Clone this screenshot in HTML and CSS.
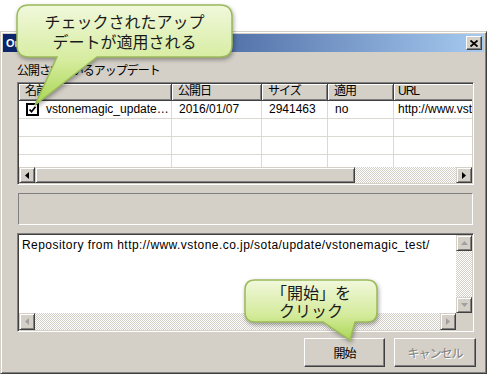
FILE: index.html
```html
<!DOCTYPE html>
<html lang="ja">
<head>
    <meta charset="UTF-8">
    <meta name="viewport" content="width=device-width, initial-scale=1.0">
    <title>Online Update</title>
    <link rel="stylesheet" href="styles.css">
</head>
<body>
    <div class="dialog">
        <div class="titlebar">
            <span class="title">Online Update</span>
            <span class="close-btn">
                <svg width="8" height="7" viewBox="0 0 8 7"><path d="M0.5 0.5L7.5 6.5M7.5 0.5L0.5 6.5" stroke="#000" stroke-width="1.8"/></svg>
            </span>
        </div>

        <div class="content">
            <div class="group-label jp">公開されているアップデート</div>

            <div class="listview">
                <div class="lv-header jp">
                    <div class="cell c-name">名前</div>
                    <div class="cell c-date">公開日</div>
                    <div class="cell c-size">サイズ</div>
                    <div class="cell c-apply">適用</div>
                    <div class="cell c-url">URL</div>
                </div>
                <div class="lv-body">
                    <div class="lv-row">
                        <div class="cell c-name">
                            <svg class="check" width="13" height="13" viewBox="0 0 13 13"><rect x="1" y="1" width="11" height="11" fill="#fff" stroke="#000" stroke-width="2"/><path d="M3.5 6.5l2 2.2 4-5" fill="none" stroke="#000" stroke-width="1.8"/></svg>
                            <span>vstonemagic_update…</span>
                        </div>
                        <div class="cell c-date">2016/01/07</div>
                        <div class="cell c-size">2941463</div>
                        <div class="cell c-apply">no</div>
                        <div class="cell c-url">http://www.vstone.co.jp/</div>
                    </div>
                    <div class="lv-row">
                        <div class="cell c-name"></div><div class="cell c-date"></div><div class="cell c-size"></div><div class="cell c-apply"></div><div class="cell c-url"></div>
                    </div>
                    <div class="lv-row">
                        <div class="cell c-name"></div><div class="cell c-date"></div><div class="cell c-size"></div><div class="cell c-apply"></div><div class="cell c-url"></div>
                    </div>
                    <div class="lv-row">
                        <div class="cell c-name"></div><div class="cell c-date"></div><div class="cell c-size"></div><div class="cell c-apply"></div><div class="cell c-url"></div>
                    </div>
                </div>
                <div class="hscroll">
                    <span class="sb-btn"><svg width="4" height="7" viewBox="0 0 4 7"><path d="M4 0v7L0 3.5z"/></svg></span>
                    <span class="sb-thumb"></span>
                    <span class="sb-track"></span>
                    <span class="sb-btn"><svg width="4" height="7" viewBox="0 0 4 7"><path d="M0 0v7l4-3.5z"/></svg></span>
                </div>
            </div>

            <div class="status-panel"></div>

            <div class="log-box">
                <div class="log-main">
                    <div class="log-text">Repository from http://www.vstone.co.jp/sota/update/vstonemagic_test/</div>
                    <div class="vscroll">
                        <span class="sb-btn dim"><svg width="7" height="4" viewBox="0 0 7 4"><path d="M0 4h7L3.5 0z"/></svg></span>
                        <span class="sb-track"></span>
                        <span class="sb-btn dim"><svg width="7" height="4" viewBox="0 0 7 4"><path d="M0 0h7L3.5 4z"/></svg></span>
                    </div>
                </div>
                <div class="log-bottom">
                    <span class="sb-btn dim"><svg width="4" height="7" viewBox="0 0 4 7"><path d="M4 0v7L0 3.5z"/></svg></span>
                    <span class="sb-track"></span>
                    <span class="sb-btn dim"><svg width="4" height="7" viewBox="0 0 4 7"><path d="M0 0v7l4-3.5z"/></svg></span>
                    <span class="corner"></span>
                </div>
            </div>

            <div class="buttons jp">
                <button class="btn btn-default">開始</button>
                <button class="btn" disabled>キャンセル</button>
            </div>
        </div>
    </div>

    <div class="callout callout-check">
        <svg class="bubble" width="235" height="112" viewBox="0 0 235 112">
            <defs>
                <linearGradient id="g1" x1="0" y1="0" x2="0" y2="1">
                    <stop offset="0" stop-color="#f1f8dc"/>
                    <stop offset="0.55" stop-color="#d6ec9f"/>
                    <stop offset="1" stop-color="#a9d653"/>
                </linearGradient>
            </defs>
            <path d="M19 5H210Q222 5 222 17V45Q222 57 210 57H87L25 105L47 57H19Q7 57 7 45V17Q7 5 19 5Z" fill="url(#g1)" stroke="#9bbb59" stroke-width="1.5"/>
        </svg>
        <div class="callout-text">チェックされたアップ<br>デートが適用される</div>
    </div>

    <div class="callout callout-start">
        <svg class="bubble" width="145" height="70" viewBox="0 0 145 70">
            <defs>
                <linearGradient id="g2" x1="0" y1="0" x2="0" y2="1">
                    <stop offset="0" stop-color="#f1f8dc"/>
                    <stop offset="0.6" stop-color="#d3ea99"/>
                    <stop offset="1" stop-color="#a9d653"/>
                </linearGradient>
            </defs>
            <path d="M15 5H127Q137 5 137 15V37Q137 47 127 47H115L110 65L83 47H15Q5 47 5 37V15Q5 5 15 5Z" fill="url(#g2)" stroke="#9bbb59" stroke-width="1.5"/>
        </svg>
        <div class="callout-text">「開始」を<br>クリック</div>
    </div>
</body>
</html>
```

FILE: styles.css
```css
body {
    margin: 0;
    width: 490px;
    height: 375px;
    position: relative;
    overflow: hidden;
    background: #ffffff;
    font-family: "Liberation Sans", "Noto Sans CJK JP", sans-serif;
    font-size: 12px;
    color: #000;
}
.jp {
    letter-spacing: -1px;
}
.dialog {
    box-sizing: border-box;
    margin-top: 31px;
    width: 487px;
    height: 343px;
    padding: 2px;
    background: #d4d0c8;
    border: 1px solid;
    border-color: #d4d0c8 #404040 #404040 #d4d0c8;
    box-shadow: inset 1px 1px #fff, inset -1px -1px #808080;
}
.titlebar {
    height: 18px;
    display: flex;
    align-items: center;
    justify-content: space-between;
    padding: 0 2px 0 3px;
    background: linear-gradient(to right, #0a246a, #a6caf0);
}
.title {
    color: #fff;
    font-weight: bold;
    font-size: 11px;
}
.close-btn {
    box-sizing: border-box;
    width: 16px;
    height: 14px;
    display: flex;
    align-items: center;
    justify-content: center;
    background: #d4d0c8;
    border: 1px solid;
    border-color: #fff #404040 #404040 #fff;
    box-shadow: inset -1px -1px #808080;
}
.content {
    padding: 12px 10px 0 14px;
}
.group-label {
    height: 14px;
    line-height: 14px;
    margin-bottom: 4px;
}

/* list view */
.listview {
    box-sizing: border-box;
    height: 103px;
    border: 1px solid;
    border-color: #808080 #fff #fff #808080;
    box-shadow: inset 1px 1px #404040, inset -1px -1px #d4d0c8;
    padding: 1px;
    display: flex;
    flex-direction: column;
}
.lv-header {
    display: flex;
    height: 17px;
    overflow: hidden;
    flex: none;
}
.lv-header .cell {
    box-sizing: border-box;
    height: 17px;
    line-height: 15px;
    padding-left: 6px;
    background: #d4d0c8;
    border-right: 1px solid #404040;
    border-bottom: 1px solid #404040;
    box-shadow: inset 1px 1px #fff, inset -1px -1px #808080;
}
.lv-body {
    height: 66px;
    background: #fff;
    overflow: hidden;
    flex: none;
}
.lv-row {
    display: flex;
    height: 18px;
}
.lv-row .cell {
    box-sizing: border-box;
    height: 18px;
    line-height: 17px;
    padding-left: 7px;
    border-right: 1px solid #dcd9d2;
    border-bottom: 1px solid #dcd9d2;
    white-space: nowrap;
    overflow: hidden;
}
.cell.c-name { width: 153px; flex: none; }
.cell.c-date { width: 90px; flex: none; }
.cell.c-size { width: 66px; flex: none; }
.cell.c-apply { width: 66px; flex: none; }
.cell.c-url { width: 110px; flex: none; padding-left: 4px; }
.lv-row .c-name {
    display: flex;
    align-items: center;
    gap: 7px;
}
.check {
    flex: none;
}

/* scrollbars */
.hscroll {
    display: flex;
    height: 16px;
    flex: none;
}
.sb-btn {
    box-sizing: border-box;
    width: 16px;
    height: 16px;
    flex: none;
    display: flex;
    align-items: center;
    justify-content: center;
    background: #d4d0c8;
    border: 1px solid;
    border-color: #d4d0c8 #404040 #404040 #d4d0c8;
    box-shadow: inset 1px 1px #fff, inset -1px -1px #808080;
}
.sb-btn svg path {
    fill: #000;
}
.sb-btn.dim svg path {
    fill: #a0a0a0;
}
.sb-thumb {
    box-sizing: border-box;
    width: 320px;
    flex: none;
    background: #d4d0c8;
    border: 1px solid;
    border-color: #d4d0c8 #404040 #404040 #d4d0c8;
    box-shadow: inset 1px 1px #fff, inset -1px -1px #808080;
}
.sb-track {
    flex: 1;
    background: repeating-conic-gradient(#ffffff 0 25%, #d4d0c8 0 50%) 0 0 / 2px 2px;
}

.status-panel {
    box-sizing: border-box;
    height: 32px;
    margin: 8px 1px 0;
    border: 1px solid;
    border-color: #808080 #fff #fff #808080;
}

/* log text box */
.log-box {
    box-sizing: border-box;
    height: 99px;
    margin-top: 8px;
    border: 1px solid;
    border-color: #808080 #fff #fff #808080;
    box-shadow: inset 1px 1px #404040, inset -1px -1px #d4d0c8;
    padding: 1px;
    display: flex;
    flex-direction: column;
    background: #fff;
}
.log-main {
    flex: 1;
    display: flex;
}
.log-text {
    flex: 1;
    padding: 3px 0 0 3px;
    letter-spacing: 0.45px;
    white-space: nowrap;
    overflow: hidden;
}
.vscroll {
    width: 16px;
    display: flex;
    flex-direction: column;
}
.log-bottom {
    display: flex;
    height: 17px;
}
.log-bottom .sb-btn {
    height: 17px;
}
.corner {
    width: 16px;
    background: #d4d0c8;
}

/* buttons */
.buttons {
    display: flex;
    justify-content: flex-end;
    gap: 9px;
    margin-top: 6px;
    margin-right: -2px;
}
.btn {
    box-sizing: border-box;
    width: 82px;
    height: 29px;
    padding: 0;
    font-family: "Noto Sans CJK JP", sans-serif;
    font-size: 12px;
    letter-spacing: -1px;
    color: #000;
    background: #d4d0c8;
    border: 1px solid;
    border-color: #fff #404040 #404040 #fff;
    box-shadow: inset -1px -1px #808080;
}
.btn-default {
    width: 81px;
}
.btn:disabled {
    color: #808080;
    text-shadow: 1px 1px #fff;
}

/* callouts */
.callout {
    position: absolute;
}
.bubble {
    display: block;
    filter: drop-shadow(1px 2px 2px rgba(0, 0, 0, 0.35));
}
.callout-text {
    position: absolute;
    display: flex;
    align-items: center;
    justify-content: center;
    text-align: center;
    font-family: "Noto Sans CJK JP", sans-serif;
    font-size: 16px;
    color: #1a1a1a;
}
.callout-check {
    left: 10px;
    top: 0;
}
.callout-check .callout-text {
    left: 7px;
    top: 5px;
    width: 215px;
    height: 52px;
    line-height: 20px;
}
.callout-start {
    left: 240px;
    top: 275px;
}
.callout-start .callout-text {
    left: 5px;
    top: 5px;
    width: 132px;
    height: 42px;
    line-height: 18px;
}
```
